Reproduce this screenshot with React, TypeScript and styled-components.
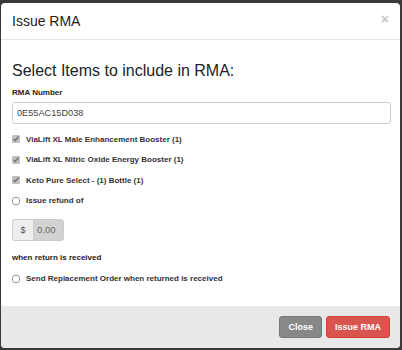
import React from 'react'
import styled, { createGlobalStyle } from 'styled-components'

const GlobalStyle = createGlobalStyle`
  html, body {
    margin: 0;
    padding: 0;
    background: #3a3a3a;
    font-family: "Liberation Sans", Arial, sans-serif;
    color: #333;
  }
`

const items = [
  { label: 'ViaLift XL Male Enhancement Booster (1)', checked: true },
  { label: 'ViaLift XL Nitric Oxide Energy Booster (1)', checked: true },
  { label: 'Keto Pure Select - (1) Bottle (1)', checked: true },
  { label: 'Issue refund of', checked: false },
]

const App = () => {
  return (
    <Page>
      <GlobalStyle />
      <Modal>
        <Header>
          <Title>Issue RMA</Title>
          <CloseX>×</CloseX>
        </Header>

        <Body>
          <Heading>Select Items to include in RMA:</Heading>
          <Label>RMA Number</Label>
          <TextInput defaultValue='0E55AC15D038' />

          <Checks>
            {items.map((it) => (
              <CheckRow key={it.label}>
                <Box type='checkbox' defaultChecked={it.checked} />
                <CheckText>{it.label}</CheckText>
              </CheckRow>
            ))}
          </Checks>

          <InputGroup>
            <Addon>$</Addon>
            <Amount value='0.00' disabled readOnly />
          </InputGroup>

          <Note>when return is received</Note>

          <CheckRow>
            <Box type='checkbox' />
            <CheckText>Send Replacement Order when returned is received</CheckText>
          </CheckRow>
        </Body>

        <Footer>
          <Button $variant='default'>Close</Button>
          <Button $variant='danger'>Issue RMA</Button>
        </Footer>
      </Modal>
    </Page>
  )
}

export default App

export const Page = styled.div`
  width: 402px;
  height: 350px;
  padding: 3px 2px 2px 1px;
  box-sizing: border-box;
  overflow: hidden;
`
export const Modal = styled.div`
  width: 399px;
  height: 345px;
  background: #fff;
  border-radius: 4px;
  overflow: hidden;
  display: flex;
  flex-direction: column;
`
export const Header = styled.div`
  display: flex;
  align-items: center;
  justify-content: space-between;
  height: 36px;
  padding: 0 11px 0 11px;
  border-bottom: 1px solid #e5e5e5;
`
export const Title = styled.h4`
  margin: 0;
  font-size: 14px;
  font-weight: normal;
  color: #222;
`
export const CloseX = styled.span`
  font-size: 14px;
  font-weight: bold;
  color: #c8c8c8;
  margin-top: -4px;
`
export const Body = styled.div`
  flex: 1;
  padding: 20px 10px 0 11px;
`
export const Heading = styled.h3`
  margin: 0 0 6px;
  font-size: 16px;
  font-weight: normal;
  line-height: 22px;
  color: #222;
`
export const Label = styled.div`
  font-size: 8px;
  font-weight: bold;
  color: #222;
  margin-bottom: 5px;
`
export const TextInput = styled.input`
  display: block;
  box-sizing: border-box;
  width: 379px;
  height: 22px;
  padding: 0 4px;
  border: 1px solid #ccc;
  border-radius: 3px;
  font: inherit;
  font-size: 9.2px;
  color: #444;
  outline: none;
`
export const Checks = styled.div`
  display: flex;
  flex-direction: column;
  gap: 6.5px;
  margin-top: 8px;
`
export const CheckRow = styled.label`
  display: flex;
  align-items: center;
  height: 14px;
`
export const Box = styled.input`
  width: 8px;
  height: 8px;
  margin: 0 6px 0 0;
  accent-color: #aaa;
  opacity: 0.75;
`
export const CheckText = styled.span`
  font-size: 8px;
  font-weight: bold;
  color: #333;
`
export const InputGroup = styled.div`
  display: flex;
  margin-top: 11px;
  height: 22px;
  width: 52px;
`
export const Addon = styled.span`
  display: flex;
  align-items: center;
  justify-content: center;
  width: 21px;
  background: #eee;
  border: 1px solid #ccc;
  border-right: none;
  border-radius: 3px 0 0 3px;
  font-size: 9px;
  color: #555;
`
export const Amount = styled.input`
  width: 31px;
  box-sizing: border-box;
  padding: 0 3px;
  border: 1px solid #ccc;
  border-radius: 0 3px 3px 0;
  background: #d2d2d2;
  font: inherit;
  font-size: 9.5px;
  color: #666;
`
export const Note = styled.div`
  font-size: 8px;
  font-weight: bold;
  color: #222;
  margin: 12px 0 10px;
`
export const Footer = styled.div`
  display: flex;
  justify-content: flex-end;
  align-items: center;
  gap: 4px;
  height: 42px;
  padding: 0 10px 0 0;
  background: #e8e8e8;
`
export const Button = styled.button<{ $variant: 'default' | 'danger' }>`
  height: 22px;
  padding: 0 8px;
  border-radius: 3px;
  border: 1px solid ${(p) => (p.$variant === 'danger' ? '#d43f3a' : '#777')};
  background: ${(p) => (p.$variant === 'danger' ? '#d9534f' : '#888')};
  color: #fff;
  font: inherit;
  font-size: 9px;
  font-weight: bold;
`
